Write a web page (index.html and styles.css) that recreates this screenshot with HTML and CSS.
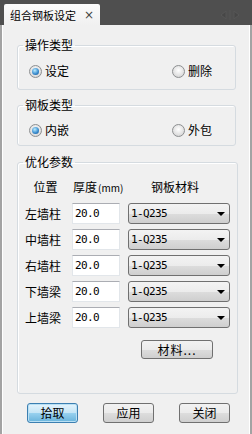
FILE: index.html
```html
<!DOCTYPE html>
<html lang="zh-CN">
<head>
  <meta charset="UTF-8" />
  <title>组合钢板设定</title>
  <link rel="stylesheet" href="styles.css">
</head>
<body>
  <div class="titlebar">
    <div class="tab">
      <span class="tab-title">组合钢板设定</span>
      <span class="tab-close">&times;</span>
    </div>
    <div class="tab-scroll">
      <svg width="22" height="10" viewBox="0 0 22 10">
        <path d="M7 1 L2 5 L7 9 Z" fill="#474747" stroke="#575757" stroke-width="1"/>
        <path d="M11 0 V10" stroke="#575757" stroke-width="1"/>
        <path d="M15 1 L20 5 L15 9 Z" fill="#474747" stroke="#575757" stroke-width="1"/>
      </svg>
    </div>
  </div>

  <div class="panel">
    <fieldset class="group group-op">
      <legend>操作类型</legend>
      <div class="radio-row">
        <label class="radio checked"><span class="dot"></span>设定</label>
        <label class="radio right"><span class="dot"></span>删除</label>
      </div>
    </fieldset>

    <fieldset class="group group-kind">
      <legend>钢板类型</legend>
      <div class="radio-row">
        <label class="radio checked"><span class="dot"></span>内嵌</label>
        <label class="radio right"><span class="dot"></span>外包</label>
      </div>
    </fieldset>

    <fieldset class="group group-params">
      <legend>优化参数</legend>
      <div class="param-grid">
        <div class="hd hd-pos">位置</div>
        <div class="hd hd-thick">厚度<small>(mm)</small></div>
        <div class="hd hd-mat">钢板材料</div>

        <div class="lbl">左墙柱</div>
        <div class="num">20.0</div>
        <div class="select"><span>1-Q235</span><i class="caret"></i></div>

        <div class="lbl">中墙柱</div>
        <div class="num">20.0</div>
        <div class="select"><span>1-Q235</span><i class="caret"></i></div>

        <div class="lbl">右墙柱</div>
        <div class="num">20.0</div>
        <div class="select"><span>1-Q235</span><i class="caret"></i></div>

        <div class="lbl">下墙梁</div>
        <div class="num">20.0</div>
        <div class="select"><span>1-Q235</span><i class="caret"></i></div>

        <div class="lbl">上墙梁</div>
        <div class="num">20.0</div>
        <div class="select"><span>1-Q235</span><i class="caret"></i></div>

        <button class="btn btn-mat">材料...</button>
      </div>
    </fieldset>

    <div class="actions">
      <button class="btn btn-default">拾取</button>
      <button class="btn">应用</button>
      <button class="btn">关闭</button>
    </div>
  </div>
</body>
</html>
```

FILE: styles.css
```css
body {
  margin: 0;
  width: 252px;
  height: 434px;
  overflow: hidden;
  background: #4f4f4f;
  font-family: "Noto Sans CJK SC", "Noto Sans", sans-serif;
  font-size: 12px;
  line-height: 14px;
  color: #000;
}

/* tab strip */
.titlebar {
  height: 25px;
  display: flex;
  align-items: flex-end;
  background: #4f4f4f;
}

.tab {
  margin-left: 4px;
  width: 96px;
  height: 21px;
  box-sizing: border-box;
  padding-left: 6px;
  display: flex;
  align-items: center;
  background: linear-gradient(#fbfbfb, #f0f0f0);
  border-radius: 2px 2px 0 0;
  font-size: 11px;
}

.tab-close {
  margin-left: auto;
  margin-right: 6px;
  font-family: "DejaVu Sans", sans-serif;
  font-size: 12px;
  color: #444;
}

.tab-scroll {
  margin-left: auto;
  margin-right: 11px;
  align-self: center;
  height: 10px;
}

/* main panel */
.panel {
  height: 409px;
  box-sizing: border-box;
  background: #f0f0f0;
  border-left: 2px solid #a3a3a3;
  border-right: 2px solid #a3a3a3;
  box-shadow: inset 1px 0 0 #fff, inset -1px 0 0 #fff;
  padding: 13px 0 0 1px;
}

.group {
  margin: 0 0 0 14px;
  width: 219px;
  box-sizing: border-box;
  border: 1px solid #d5dbe0;
  border-radius: 3px;
  box-shadow: inset 1px 1px 0 #fff;
  padding: 0 7px;
}

.group legend {
  padding: 0 2px;
  margin-left: -2px;
  line-height: 14px;
}

.group-op { padding-top: 12px; padding-bottom: 11px; }
.group-kind { margin-top: 8px; padding-top: 11px; padding-bottom: 8px; }
.group-params { margin-top: 9px; padding-top: 10px; padding-bottom: 34px; }

/* radios */
.radio-row {
  display: flex;
  height: 14px;
  padding-left: 4px;
  padding-right: 16px;
}

.radio {
  display: flex;
  align-items: center;
  gap: 3px;
}

.radio.right { margin-left: auto; }

.dot {
  position: relative;
  width: 11px;
  height: 11px;
  border-radius: 50%;
  border: 1px solid #8d8f91;
  background: radial-gradient(circle at 50% 40%, #ffffff, #dcdcdc 70%, #c6c6c6);
}

.radio.checked .dot::after {
  content: "";
  position: absolute;
  left: 2px;
  top: 2px;
  width: 7px;
  height: 7px;
  border-radius: 50%;
  background: radial-gradient(circle at 40% 35%, #b9ecff, #3d8fd0 55%, #0e4c8a);
}

/* parameter table */
.param-grid {
  display: grid;
  grid-template-columns: 39px 48px 102px;
  grid-template-rows: 19px repeat(5, 21px) auto;
  column-gap: 8px;
  row-gap: 5px;
}

.hd {
  line-height: 16px;
}

.hd-pos { text-align: center; padding-left: 2px; }
.hd-thick { padding-left: 1px; white-space: nowrap; }
.hd-thick small { font-size: 10px; margin-left: 1px; }
.hd-mat { padding-left: 23px; }

.lbl {
  line-height: 21px;
  white-space: nowrap;
}

.num,
.select span {
  font-family: "DejaVu Sans Mono", monospace;
  font-size: 11px;
  letter-spacing: -0.6px;
}

.num {
  box-sizing: border-box;
  height: 21px;
  line-height: 19px;
  padding-left: 2px;
  background: #fff;
  border: 1px solid #e2e6ea;
  border-top-color: #abadb3;
}

.select {
  box-sizing: border-box;
  height: 21px;
  display: flex;
  align-items: center;
  padding: 0 3px 0 2px;
  border: 1px solid #707070;
  border-radius: 3px;
  background: linear-gradient(#f3f3f3, #ececec 50%, #dddddd 51%, #cfcfcf);
}

.caret {
  margin-left: auto;
  width: 0;
  height: 0;
  border-left: 4px solid transparent;
  border-right: 4px solid transparent;
  border-top: 4px solid #000;
  margin-right: 1px;
}

/* buttons */
.btn {
  box-sizing: border-box;
  margin: 0;
  padding: 0;
  height: 20px;
  font-family: inherit;
  font-size: 12px;
  line-height: 18px;
  color: #000;
  border: 1px solid #707070;
  border-radius: 3px;
  background: linear-gradient(#f2f2f2, #ebebeb 50%, #dddddd 51%, #cfcfcf);
}

.btn-mat {
  grid-column: 3;
  width: 72px;
  height: 19px;
  line-height: 17px;
  margin-top: 7px;
  margin-left: 13px;
  letter-spacing: 1px;
}

.actions {
  display: flex;
  gap: 25px;
  margin-top: 9px;
  padding-left: 24px;
}

.actions .btn {
  width: 51px;
}

.btn-default {
  border-color: #3c7fb1;
  background: linear-gradient(#e5f4fc, #c4e5f6 50%, #98d1ef 51%, #68b3db);
  box-shadow: inset 0 0 0 1px #b9e0f4;
}
```
